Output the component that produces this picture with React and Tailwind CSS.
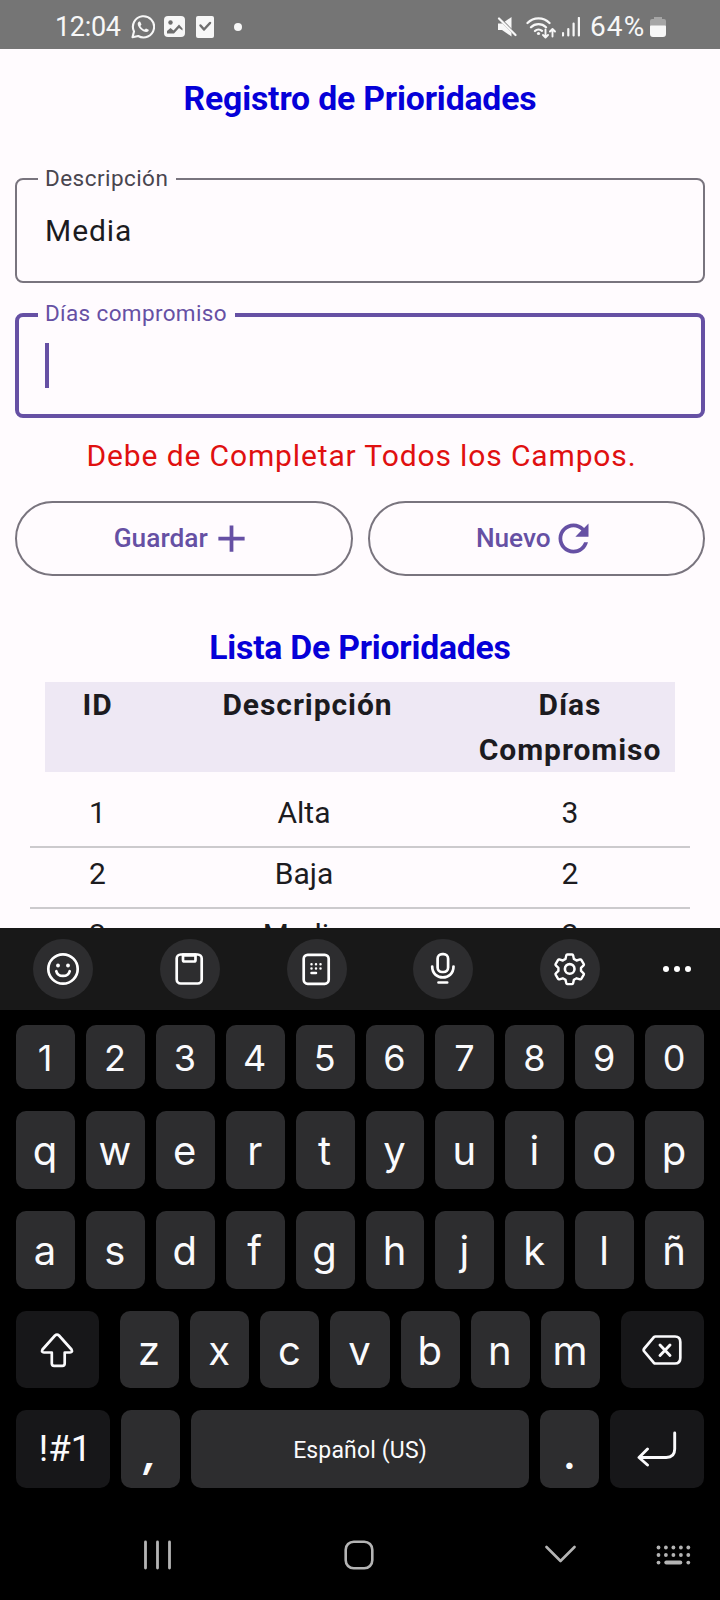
import React from "react";

const Icon = ({ w, h, children, className = "" }) => (
  <svg
    width={w}
    height={h}
    viewBox={`0 0 ${w} ${h}`}
    fill="none"
    stroke="currentColor"
    strokeWidth="2"
    strokeLinecap="round"
    strokeLinejoin="round"
    className={`shrink-0 ${className}`}
  >
    {children}
  </svg>
);

function StatusBar() {
  return (
    <header className="flex h-[49px] shrink-0 items-center bg-[#757575] pt-[4px] pl-[55px] pr-[54px] text-[#f7f7f7]">
      <span className="w-[66px] whitespace-nowrap text-[27px] leading-[30px] tracking-[-0.3px]">12:04</span>
      <Icon w={24} h={24} className="ml-[10px]">
        <path d="M1.500 22.300l1.500-5.800A10.600 10.600 0 1 1 7.200 21z" strokeWidth="2.100" />
        <path
          d="M8.300 6.400c-.6.1-1.600 1-1.600 2.400 0 3.600 4.800 8.300 8.600 8.300 1.500 0 2.400-1 2.500-2 0-.4-.2-.6-2.700-1.700-.6-.2-.8.9-1.500 1.200-.9.2-4.200-2.700-4.100-3.700.1-.6 1.100-1 .9-1.600-.9-2.400-1.100-2.900-2.100-2.900z"
          fill="currentColor"
          stroke="none"
        />
      </Icon>
      <Icon w={21} h={21} className="ml-[9px]">
        <rect x="0" y="0" width="21" height="21" rx="4" fill="currentColor" stroke="none" />
        <circle cx="6.500" cy="6.500" r="2.200" fill="#6e6e6e" stroke="none" />
        <path d="M3 17.500v-2.500l3.500-3 3 2.500 5.500-6 3.500 4v2l-3.500-2.500-5 5.500z" fill="#6e6e6e" stroke="none" />
      </Icon>
      <Icon w={18} h={22} className="ml-[11px]">
        <rect x="0" y="0" width="18" height="22" rx="2" fill="currentColor" stroke="none" />
        <path d="M4.500 9.500l3.500 4 6-6.500" stroke="#6e6e6e" strokeWidth="2.500" />
      </Icon>
      <span className="ml-[20px] size-[8px] rounded-full bg-current" />
      <div className="ml-auto flex items-center">
        <Icon w={20} h={20}>
          <path d="M1 6.500h4L14.500 0v19.500L5 13H1z" fill="currentColor" stroke="none" />
          <path d="M0 -1l20 20" stroke="#757575" strokeWidth="3" />
          <path d="M2 1.500l16.500 16.500" strokeWidth="2.200" />
        </Icon>
        <Icon w={30} h={24} className="ml-[9px]">
          <path d="M1.500 8a15.500 15.500 0 0 1 22 0M5 12.200a10.500 10.500 0 0 1 15 0M9 16a5.200 5.200 0 0 1 7-.2" strokeWidth="2.300" />
          <circle cx="12.500" cy="18.500" r="1.600" fill="currentColor" stroke="none" />
          <path d="M19.500 14.500v7.500M17 20l2.500 2.500L22 20M26.500 21.500V14M24 16.500l2.500-2.500 2.500 2.500" strokeWidth="1.900" />
        </Icon>
        <Icon w={18} h={20} className="ml-[6px]">
          <path d="M1 16v2.500M6.300 12v6.500M11.600 6.500v12M16.900 1v17.500" strokeWidth="2.200" />
        </Icon>
        <span className="ml-[10px] w-[60px] whitespace-nowrap text-[28px] leading-[30px] tracking-[1.100px]">64%</span>
        <Icon w={16} h={20}>
          <path d="M4 0h8v2h2a2 2 0 0 1 2 2v5H0V4a2 2 0 0 1 2-2h2z" fill="#a5a5a5" stroke="none" />
          <path d="M1 9.500h14V17a2 2 0 0 1-2 2H3a2 2 0 0 1-2-2z" fill="currentColor" />
        </Icon>
      </div>
    </header>
  );
}

function Registro() {
  return (
    <section className="flex flex-col px-[15px]">
      <h1 className="mt-[29px] text-center text-[33.750px] leading-[42px] font-bold tracking-[-0.170px] text-[#0500d8]">
        Registro de Prioridades
      </h1>

      <div className="relative mt-[58px] flex h-[105px] flex-col rounded-[8px] border-2 border-[#79747e] pl-[28px] pt-[28px]">
        <label className="absolute -top-[16px] left-[21px] bg-[#fffbfe] pl-[7px] pr-[8px] text-[22.500px] leading-[28px] tracking-[0.450px] whitespace-nowrap text-[#49454f]">
          Descripción
        </label>
        <span className="text-[30px] leading-[45px] tracking-[0.940px]">Media</span>
      </div>

      <div className="relative mt-[30px] flex h-[105px] flex-col rounded-[8px] border-4 border-[#6650a4] pl-[26px] pt-[26px]">
        <label className="absolute -top-[18px] left-[19px] bg-[#fffbfe] pl-[7px] pr-[8px] text-[22.500px] leading-[28px] tracking-[0.350px] whitespace-nowrap text-[#6650a4]">
          Días compromiso
        </label>
        <span className="h-[45px] w-[4px] bg-[#6650a4]" />
      </div>

      <p className="mt-[15px] pl-[3px] text-center text-[30px] leading-[45px] tracking-[0.870px] text-[#e01010]">
        Debe de Completar Todos los Campos.
      </p>

      <div className="mt-[23px] grid grid-cols-2 gap-[15px]">
        <button className="flex h-[75px] items-center justify-center gap-[1px] rounded-full border-2 border-[#79747e] text-[26.250px] font-medium tracking-[0.050px] text-[#6650a4]">
          <span className="pt-[1px]">Guardar</span>
          <svg width="45" height="45" viewBox="0 0 24 24" fill="currentColor">
            <path d="M19 13h-6v6h-2v-6H5v-2h6V5h2v6h6v2z" />
          </svg>
        </button>
        <button className="flex h-[75px] items-center justify-center gap-[1px] rounded-full border-2 border-[#79747e] text-[26.250px] font-medium tracking-[-0.100px] text-[#6650a4]">
          <span className="pt-[1px]">Nuevo</span>
          <svg width="45" height="45" viewBox="0 0 24 24" fill="currentColor">
            <path d="M17.650 6.350C16.200 4.900 14.210 4 12 4c-4.420 0-7.990 3.580-7.990 8s3.570 8 7.990 8c3.730 0 6.840-2.550 7.730-6h-2.080c-.82 2.330-3.040 4-5.650 4-3.310 0-6-2.690-6-6s2.690-6 6-6c1.660 0 3.140.69 4.220 1.780L13 11h7V4l-2.350 2.350z" />
          </svg>
        </button>
      </div>
    </section>
  );
}

const rows = [
  ["1", "Alta", "3"],
  ["2", "Baja", "2"],
  ["3", "Media", "2"],
];

function Lista() {
  return (
    <section className="flex min-h-0 flex-1 flex-col overflow-hidden px-[30px]">
      <h2 className="mt-[51px] h-[55px] shrink-0 text-center text-[33.750px] leading-[42px] font-bold tracking-[-0.230px] text-[#0500d8]">
        Lista De Prioridades
      </h2>
      <div className="mx-[15px] flex h-[90px] shrink-0 bg-[#eee8f4] text-center text-[30px] leading-[45px] font-bold tracking-[0.940px]">
        <span className="w-[105px]">ID</span>
        <span className="w-[315px]">Descripción</span>
        <span className="w-[210px]">Días Compromiso</span>
      </div>
      <div className="mt-[15px] flex flex-col">
        {rows.map(([id, name, days]) => (
          <div
            key={id}
            className="flex h-[61px] shrink-0 border-b-2 border-[#cccacd] px-[15px] pt-[3px] text-center text-[30px] leading-[45px]"
          >
            <span className="w-[105px]">{id}</span>
            <span className="w-[308px]">{name}</span>
            <span className="ml-[7px] w-[210px]">{days}</span>
          </div>
        ))}
      </div>
    </section>
  );
}

const Tool = ({ children }) => (
  <span className="flex size-[60px] items-center justify-center rounded-full bg-[#2d2d2f] pr-[1px] pb-[1px]">{children}</span>
);

function Toolbar() {
  return (
    <div className="flex h-[82px] items-center bg-[#181818] pl-[33px] pr-[29px]">
      <div className="flex gap-[66.750px]">
        <Tool>
          <Icon w={34} h={34}>
            <circle cx="17" cy="17" r="14.700" strokeWidth="2.700" />
            <circle cx="12" cy="13.500" r="1.900" fill="currentColor" stroke="none" />
            <circle cx="22" cy="13.500" r="1.900" fill="currentColor" stroke="none" />
            <path d="M10.300 19.200c1.500 6.300 11.900 6.300 13.400 0" strokeWidth="2.700" />
          </Icon>
        </Tool>
        <Tool>
          <Icon w={34} h={34}>
            <rect x="4.700" y="2.500" width="25" height="29" rx="4" strokeWidth="2.700" />
            <path d="M11 2.500v5.500a1.500 1.500 0 0 0 1.500 1.500h9.500a1.500 1.500 0 0 0 1.500-1.500V2.500" strokeWidth="2.700" />
            <path d="M12 3h10.500" strokeWidth="3.500" />
          </Icon>
        </Tool>
        <Tool>
          <Icon w={34} h={34}>
            <rect x="4.700" y="2.800" width="25" height="29" rx="4" strokeWidth="2.700" />
            <path d="M12.500 12.300h.01M17 12.300h.01M21.500 12.300h.01M12.500 16.600h.01M17 16.600h.01M21.500 16.600h.01M12.500 21h4.500" strokeWidth="2.500" />
          </Icon>
        </Tool>
        <Tool>
          <Icon w={34} h={34}>
            <rect x="11.600" y="2.200" width="10.500" height="17.800" rx="4.500" strokeWidth="2.700" />
            <path d="M6.200 14.500c0 14.500 21.300 14.500 21.300 0M12.500 30.500h8.700" strokeWidth="2.700" />
          </Icon>
        </Tool>
        <Tool>
          <Icon w={34} h={34}>
            <path
              d="M14.200 2.500h5q.7 0 .9.800l.8 3.600 2.700 1.600 3.500-1.100q.8-.2 1.200.4l2.500 4.300q.4.700-.2 1.200l-2.600 2.600v3l2.600 2.500q.6.500.2 1.200l-2.500 4.300q-.4.600-1.200.4l-3.500-1-2.700 1.500-.8 3.500q-.2.800-.9.800h-5q-.7 0-.9-.8l-.8-3.500-2.700-1.500-3.500 1q-.8.200-1.200-.4l-2.500-4.300q-.4-.7.2-1.200l2.600-2.500v-3L2.800 13.300q-.6-.5-.2-1.200l2.500-4.300q.4-.6 1.200-.4l3.500 1.100 2.700-1.600.8-3.600q.2-.8.9-.8z"
              strokeWidth="2.400"
            />
            <circle cx="16.700" cy="16.900" r="4.800" strokeWidth="2.600" />
          </Icon>
        </Tool>
      </div>
      <div className="ml-auto flex gap-[5px]">
        <span className="size-[6px] rounded-full bg-white" />
        <span className="size-[6px] rounded-full bg-white" />
        <span className="size-[6px] rounded-full bg-white" />
      </div>
    </div>
  );
}

const Key = ({ children, className = "flex-1 bg-[#2d2d2f] pt-[2px] pr-[1px]" }) => (
  <span className={`flex items-center justify-center rounded-[10px] ${className}`}>{children}</span>
);

const letters = (s) => s.split("").map((c) => <Key key={c}>{c}</Key>);

function Keyboard() {
  return (
    <div className="flex flex-col gap-[22px] px-[16px] pt-[15px] font-['Inter',sans-serif] text-[40px] leading-none text-[#fafafc]">
      <div className="flex h-[64px] gap-[11px] text-[36px]">{letters("1234567890")}</div>
      <div className="flex h-[78px] gap-[11px]">{letters("qwertyuiop")}</div>
      <div className="flex h-[78px] gap-[11px]">{letters("asdfghjklñ")}</div>
      <div className="flex h-[77px] gap-[21px]">
        <Key className="w-[83px] bg-[#171719] pr-[1px]">
          <Icon w={34} h={36}>
            <path
              d="M15 3q2-1.900 4 0l12.500 14q1.400 3-1.500 3h-5.300v11q0 2.300-2.300 2.300h-8.300q-2.300 0-2.300-2.300V20H4q-2.900 0-1.500-3z"
              transform="translate(0 .5)"
              strokeWidth="2.700"
            />
          </Icon>
        </Key>
        <div className="flex flex-1 gap-[11px]">{letters("zxcvbnm")}</div>
        <Key className="w-[83px] bg-[#171719] pr-[1px]">
          <Icon w={40} h={32}>
            <path d="M13.500 2.500h19.500q5.300 0 5.300 5.500v16q0 5.500-5.300 5.500H13.500q-1 0-1.800-.8L2.300 17.500q-1.300-1.500 0-3L11.700 3.300q.8-.8 1.800-.8z" strokeWidth="2.700" />
            <path d="M18 11l10 10.500M28 11l-10 10.500" strokeWidth="2.900" />
          </Icon>
        </Key>
      </div>
      <div className="flex h-[78px] gap-[11px]">
        <Key className="w-[94px] bg-[#171719] pl-[4px] pt-[1px] font-['Roboto',sans-serif] text-[36.500px]">!#1</Key>
        <Key className="w-[59px] bg-[#2d2d2f] pt-[8px] font-bold italic">,</Key>
        <Key className="flex-1 bg-[#2d2d2f] pt-[2px] font-['Roboto',sans-serif] text-[23px] tracking-[0.150px]">Español (US)</Key>
        <Key className="w-[59px] bg-[#2d2d2f] pt-[12px] font-semibold">.</Key>
        <Key className="w-[94px] bg-[#171719]">
          <Icon w={40} h={36}>
            <path d="M37.700 2v16q0 8.500-8.500 8.500H2.500M10.500 18L2 26.500l8.500 7.500" strokeWidth="2.900" />
          </Icon>
        </Key>
      </div>
    </div>
  );
}

function NavBar() {
  return (
    <nav className="mt-auto flex h-[90px] items-center pl-[143px] pr-[29px] pb-[1px] text-[#b4b4b4]">
      <Icon w={30} h={32}>
        <path d="M2.500 3v26M14.500 3v26M26.500 3v26" strokeWidth="2.800" />
      </Icon>
      <Icon w={32} h={32} className="ml-[169.500px]">
        <rect x="2.700" y="2.700" width="26.600" height="26.600" rx="8" strokeWidth="2.600" />
      </Icon>
      <Icon w={32} h={20} className="ml-[169.500px]">
        <path d="M2.500 2L16.500 16 30.500 2" strokeWidth="2.600" />
      </Icon>
      <Icon w={36} h={22} className="mt-[3px] ml-auto">
        <g fill="currentColor" stroke="none">
          {[3.5, 10.9, 18.4, 25.9, 33.3].map((x) => (
            <React.Fragment key={x}>
              <circle cx={x} cy="2.500" r="1.900" />
              <circle cx={x} cy="10" r="1.900" />
            </React.Fragment>
          ))}
          <circle cx="3.500" cy="17.600" r="1.900" />
          <circle cx="33.300" cy="17.600" r="1.900" />
          <rect x="9.300" y="15.600" width="18" height="4" rx="2" />
        </g>
      </Icon>
    </nav>
  );
}

export default function App() {
  return (
    <main className="flex h-[1600px] w-[720px] flex-col overflow-hidden bg-[#fffbfe] font-['Roboto',sans-serif] text-[#1c1b1f]">
      <StatusBar />
      <div className="flex h-[879px] shrink-0 flex-col overflow-hidden">
        <Registro />
        <Lista />
      </div>
      <div className="flex h-[672px] shrink-0 flex-col bg-black text-white">
        <Toolbar />
        <Keyboard />
        <NavBar />
      </div>
    </main>
  );
}
